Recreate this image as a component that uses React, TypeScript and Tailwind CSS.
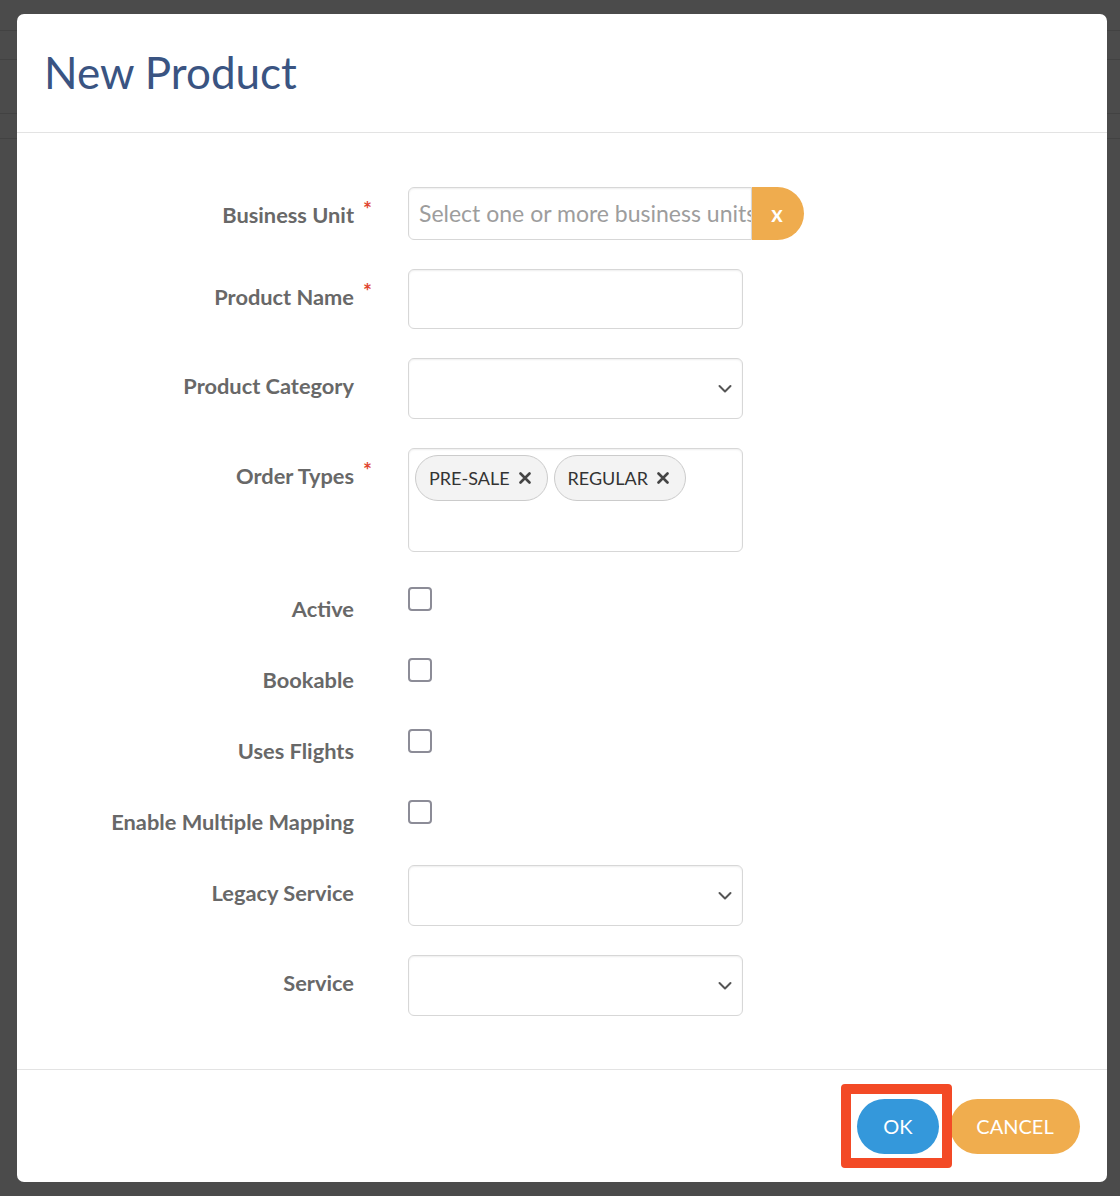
import type { ReactNode } from "react";

const Chevron = () => (
  <svg width="14" height="9" viewBox="0 0 14 9" className="absolute right-[10px] top-1/2 -translate-y-1/2">
    <path d="M1.5 1.5 L7 7 L12.5 1.5" fill="none" stroke="#555" strokeWidth="2" strokeLinecap="round" strokeLinejoin="round" />
  </svg>
);

const Cross = () => (
  <svg width="12" height="12" viewBox="0 0 12 12">
    <path d="M1.5 1.5 L10.5 10.5 M10.5 1.5 L1.5 10.5" stroke="#444" strokeWidth="2.6" strokeLinecap="round" />
  </svg>
);

const Row = ({
  label,
  required,
  children,
  compact,
}: {
  label: string;
  required?: boolean;
  children: ReactNode;
  compact?: boolean;
}) => (
  <div className={`flex ${compact ? "h-[42px]" : ""}`}>
    <div className="w-[337px] shrink-0 pt-[14px] text-right text-[21.8px] leading-[28px] font-bold text-[#686868]">
      {label}
    </div>
    <div className="w-[54px] shrink-0 pl-[9px] pt-[10px] text-[21px] leading-[24px] font-bold text-[#e0452f]">
      {required ? "*" : ""}
    </div>
    <div>{children}</div>
  </div>
);

const TextBox = () => (
  <div className="w-[335px] h-[60px] rounded-[6px] border border-[#d7d7d7] bg-white shadow-[inset_0_1px_2px_rgba(0,0,0,0.07)]" />
);

const SelectBox = () => (
  <div className="relative w-[335px] h-[61px] rounded-[6px] border border-[#d7d7d7] bg-white shadow-[inset_0_1px_2px_rgba(0,0,0,0.07)]">
    <Chevron />
  </div>
);

const Chip = ({ text }: { text: string }) => (
  <div className="flex items-center gap-[9px] h-[46px] pl-[13px] pr-[16px] rounded-full border border-[#cbcbcb] bg-[#f3f3f3] text-[18px] text-[#333]">
    <span>{text}</span>
    <Cross />
  </div>
);

const CheckBox = () => (
  <div className="mt-[6px] w-[24px] h-[24px] rounded-[4px] border-2 border-[#8c8c97] bg-white" />
);

export default function App() {
  return (
    <div className="relative w-full min-h-[1196px] bg-[#4b4b4b] font-['Lato','Liberation_Sans',sans-serif]">
      {/* page behind the overlay */}
      <div className="h-[31px] border-b border-[#424242]" />
      <div className="h-[29px] border-b border-[#424242]" />
      <div className="h-[54px] border-b border-[#424242]" />
      <div className="h-[25px] border-b border-[#424242]" />

      <div className="absolute left-[17px] top-[14px] w-[1090px] h-[1168px] rounded-[7px] bg-white flex flex-col overflow-hidden">
        <div className="h-[119px] shrink-0 flex items-center pl-[27px] border-b border-[#e3e3e3]">
          <h1 className="text-[44px] leading-none text-[#3a5482] pb-[2px]">New Product</h1>
        </div>

        <div className="flex-1 flex flex-col gap-[29px] pt-[54px]">
          <Row label="Business Unit" required>
            <div className="flex">
              <div className="w-[344px] h-[53px] flex items-center pl-[10px] overflow-hidden whitespace-nowrap rounded-l-[6px] border border-[#d7d7d7] text-[23px] text-[#9d9d9d] shadow-[inset_0_1px_2px_rgba(0,0,0,0.07)]">
                Select one or more business units
              </div>
              <button className="w-[52px] h-[53px] rounded-r-full bg-[#efac4e] text-white text-[22px] font-bold leading-none pr-[2px]">
                x
              </button>
            </div>
          </Row>

          <Row label="Product Name" required>
            <TextBox />
          </Row>

          <Row label="Product Category">
            <SelectBox />
          </Row>

          <Row label="Order Types" required>
            <div className="w-[335px] h-[104px] rounded-[6px] border border-[#d7d7d7] bg-white p-[6px] flex items-start gap-[6px] shadow-[inset_0_1px_2px_rgba(0,0,0,0.07)]">
              <Chip text="PRE-SALE" />
              <Chip text="REGULAR" />
            </div>
          </Row>

          <Row label="Active" compact>
            <CheckBox />
          </Row>
          <Row label="Bookable" compact>
            <CheckBox />
          </Row>
          <Row label="Uses Flights" compact>
            <CheckBox />
          </Row>
          <Row label="Enable Multiple Mapping" compact>
            <CheckBox />
          </Row>

          <Row label="Legacy Service">
            <SelectBox />
          </Row>
          <Row label="Service">
            <SelectBox />
          </Row>
        </div>

        <div className="h-[113px] shrink-0 flex items-center justify-end gap-[11px] pr-[27px] border-t border-[#e3e3e3]">
          <div className="relative">
            <button className="w-[82px] h-[55px] rounded-full bg-[#3498db] text-white text-[20px]">OK</button>
            <div className="absolute -left-[16px] -right-[13px] -top-[15px] -bottom-[14px] rounded-[4px] border-[10px] border-[#f34a26]" />
          </div>
          <button className="w-[130px] h-[55px] rounded-full bg-[#f0ad4e] text-white text-[20px]">CANCEL</button>
        </div>
      </div>
    </div>
  );
}
